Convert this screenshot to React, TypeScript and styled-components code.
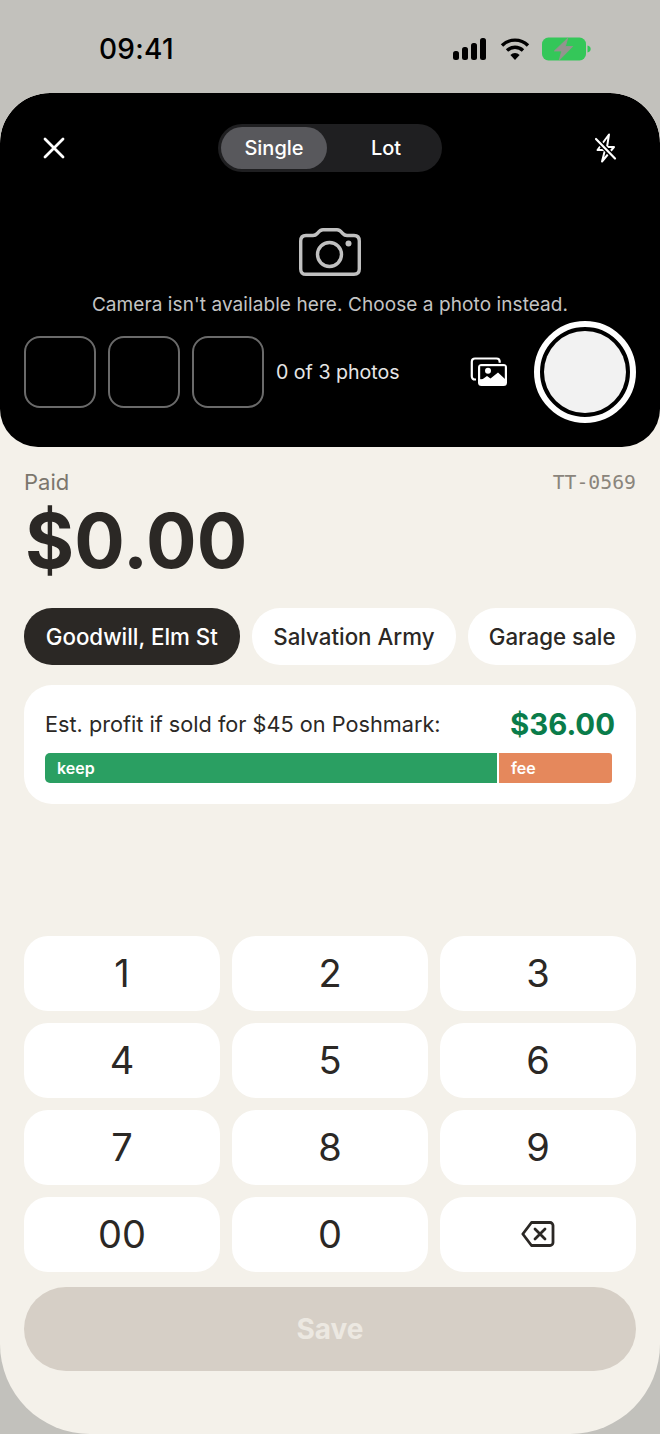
import styled, { createGlobalStyle } from "styled-components";

const GlobalStyle = createGlobalStyle`
  html, body {
    margin: 0;
    padding: 0;
    background: #c2c1bc;
  }
  * {
    box-sizing: border-box;
  }
  body {
    font-family: Inter, "Liberation Sans", sans-serif;
  }
`;

const KEYS = ["1", "2", "3", "4", "5", "6", "7", "8", "9", "00", "0"];
const STORES = ["Goodwill, Elm St", "Salvation Army", "Garage sale"];

export default function App() {
  return (
    <Page>
      <GlobalStyle />
      <StatusBar>
        <Clock>09:41</Clock>
        <StatusIcons>
          <svg width="36" height="24" viewBox="0 0 36 24" fill="#000">
            <rect x="1" y="14" width="6" height="9" rx="2.5" />
            <rect x="10" y="10" width="6" height="13" rx="2.5" />
            <rect x="19" y="6" width="6" height="17" rx="2.5" />
            <rect x="28" y="1" width="6" height="22" rx="2.5" />
          </svg>
          <svg width="30" height="24" viewBox="0 0 30 24" fill="none" stroke="#000" strokeWidth="3.4">
            <path d="M2 8.5a18.5 18.5 0 0 1 26 0" />
            <path d="M7 13.5a11.5 11.5 0 0 1 16 0" />
            <path d="M15 23l-4.6-5a6.4 6.4 0 0 1 9.2 0z" fill="#000" stroke="none" />
          </svg>
          <svg width="49" height="24" viewBox="0 0 49 24">
            <rect x="0" y="0.5" width="44" height="23" rx="6.5" fill="#34c759" />
            <path d="M45.5 8.5c2 .5 3.2 1.8 3.2 3.5s-1.2 3-3.2 3.5z" fill="#34c759" />
            <path d="M25.7 1.2 12.3 14h7.4l-2.4 9L30.7 9.5h-7.4z" fill="#94948f" stroke="#94948f" strokeWidth="0.8" strokeLinejoin="round" />
          </svg>
        </StatusIcons>
      </StatusBar>

      <Sheet>
        <CameraPanel>
          <CameraTop>
            <CloseButton aria-label="Close">
              <svg width="24" height="24" viewBox="0 0 24 24" fill="none" stroke="#fff" strokeWidth="2.8" strokeLinecap="round">
                <path d="M3 3l18 18M21 3L3 21" />
              </svg>
            </CloseButton>
            <Segmented>
              <Segment $active>Single</Segment>
              <Segment>Lot</Segment>
            </Segmented>
            <FlashButton aria-label="Flash off">
              <svg width="24" height="30" viewBox="0 0 24 30" fill="none" stroke="#fff" strokeLinejoin="round" strokeLinecap="round">
                <path d="M15 1.5 3.5 17H11L8 28.5 20 14h-7z" strokeWidth="2" />
                <path d="M2 6l19 19.5" stroke="#000" strokeWidth="5" />
                <path d="M2 6l19 19.5" strokeWidth="2.2" />
              </svg>
            </FlashButton>
          </CameraTop>

          <CameraIcon>
            <svg width="62" height="48" viewBox="0 0 62 48" fill="none" stroke="#c0c0c0" strokeWidth="3.4" strokeLinejoin="round">
              <path d="M7 7.5h7c2 0 3-.6 4.3-2C20 3.2 21 1.7 24 1.7h14c3 0 4 1.5 5.7 3.8 1.3 1.400 2.300 2 4.300 2h7c3.500 0 5.300 2 5.300 5.500v28c0 3.500-1.800 5.300-5.300 5.300H7c-3.500 0-5.300-1.800-5.300-5.300V13c0-3.500 1.800-5.500 5.300-5.500z" />
              <circle cx="30.5" cy="26.5" r="12" />
              <circle cx="49.5" cy="15.5" r="3" fill="#c0c0c0" stroke="none" />
            </svg>
          </CameraIcon>
          <Hint>Camera isn't available here. Choose a photo instead.</Hint>

          <CaptureRow>
            <Thumb />
            <Thumb />
            <Thumb />
            <PhotoCount>0 of 3 photos</PhotoCount>
            <GalleryIcon aria-label="Choose a photo">
              <svg width="38" height="30" viewBox="0 0 38 30" fill="none">
                <path d="M6 22.5H5c-2 0-3.2-1.200-3.200-3.200V4.700C1.800 2.700 3 1.500 5 1.500h21.500c2 0 3.200 1.200 3.200 3.200v1" stroke="#fff" strokeWidth="2.2" />
                <rect x="8" y="7" width="29" height="22" rx="3.5" fill="#fff" />
                <rect x="10.2" y="9.2" width="24.6" height="13" fill="#000" />
                <circle cx="18" cy="13.8" r="3" fill="#fff" />
                <path d="M10 24l7-5 3.5 2.5L28 15.5 35 22v5H10z" fill="#fff" />
              </svg>
            </GalleryIcon>
            <Shutter aria-label="Take photo">
              <ShutterCore />
            </Shutter>
          </CaptureRow>
        </CameraPanel>

        <Content>
          <PaidRow>
            <PaidLabel>Paid</PaidLabel>
            <TicketCode>TT-0569</TicketCode>
          </PaidRow>
          <Amount>$0.00</Amount>

          <Chips>
            {STORES.map((store, i) => (
              <Chip key={store} $selected={i === 0}>
                {store}
              </Chip>
            ))}
          </Chips>

          <ProfitCard>
            <ProfitRow>
              <ProfitLabel>Est. profit if sold for $45 on Poshmark:</ProfitLabel>
              <ProfitValue>$36.00</ProfitValue>
            </ProfitRow>
            <SplitBar>
              <Keep>keep</Keep>
              <Fee>fee</Fee>
            </SplitBar>
          </ProfitCard>

          <Keypad>
            {KEYS.map((key) => (
              <Key key={key}>{key}</Key>
            ))}
            <Key aria-label="Delete">
              <svg width="34" height="28" viewBox="0 0 34 28" fill="none" stroke="#2b2825" strokeWidth="2.8" strokeLinejoin="round" strokeLinecap="round">
                <path d="M10.5 2.5H29a3 3 0 0 1 3 3v17a3 3 0 0 1-3 3H10.5L1.8 14z" />
                <path d="M14 9l10 10M24 9L14 19" />
              </svg>
            </Key>
          </Keypad>

          <SaveButton disabled>Save</SaveButton>
        </Content>
      </Sheet>
    </Page>
  );
}

const Page = styled.div`
  width: 660px;
  height: 1434px;
  overflow: hidden;
  background: #c2c1bc;
  display: flex;
  flex-direction: column;
`;

const StatusBar = styled.div`
  height: 93px;
  flex: none;
  display: flex;
  align-items: center;
  justify-content: space-between;
  padding: 4px 69px 0 99px;
`;

const Clock = styled.div`
  font-size: 28px;
  font-weight: 500;
  color: #000;
  letter-spacing: 0.3px;
`;

const StatusIcons = styled.div`
  display: flex;
  align-items: center;
  gap: 12px;
`;

const Sheet = styled.div`
  flex: 1;
  background: #f4f1ea;
  border-radius: 50px 50px 90px 90px;
  overflow: hidden;
  display: flex;
  flex-direction: column;
`;

const CameraPanel = styled.div`
  height: 354px;
  flex: none;
  background: #000;
  border-radius: 50px 50px 38px 38px;
  padding: 31px 24px 0;
  display: flex;
  flex-direction: column;
  align-items: center;
`;

const CameraTop = styled.div`
  width: 100%;
  height: 48px;
  display: grid;
  grid-template-columns: 1fr 224px 1fr;
  align-items: center;
  padding: 0 18px;
`;

const IconButton = styled.button`
  border: 0;
  padding: 0;
  background: none;
  display: flex;
  align-items: center;
  justify-content: center;
`;

const CloseButton = styled(IconButton)`
  justify-self: start;
`;

const FlashButton = styled(IconButton)`
  justify-self: end;
`;

const Segmented = styled.div`
  height: 48px;
  border-radius: 24px;
  background: #1f1f21;
  padding: 3px;
  display: flex;
`;

const Segment = styled.div<{ $active?: boolean }>`
  flex: ${(p) => (p.$active ? "0 0 106px" : "1")};
  padding-left: ${(p) => (p.$active ? "0" : "6px")};
  border-radius: 21px;
  background: ${(p) => (p.$active ? "#58585c" : "transparent")};
  color: #fff;
  font-size: 20px;
  font-weight: 500;
  display: flex;
  align-items: center;
  justify-content: center;
`;

const CameraIcon = styled.div`
  margin-top: 56px;
  height: 48px;
  display: flex;
`;

const Hint = styled.div`
  margin-top: 17px;
  font-size: 19px;
  line-height: 24px;
  letter-spacing: 0.08px;
  color: #c4c4c4;
  white-space: nowrap;
`;

const CaptureRow = styled.div`
  width: 100%;
  margin-top: 4px;
  height: 102px;
  display: flex;
  align-items: center;
  gap: 12px;
`;

const Thumb = styled.div`
  width: 72px;
  height: 72px;
  flex: none;
  border-radius: 16px;
  border: 2px solid #6a6a6a;
`;

const PhotoCount = styled.div`
  font-size: 19.6px;
  color: #e6e6e6;
`;

const GalleryIcon = styled(IconButton)`
  margin-left: auto;
  margin-right: 14px;
`;

const Shutter = styled.button`
  width: 102px;
  height: 102px;
  flex: none;
  border-radius: 50%;
  border: 6px solid #fff;
  padding: 4px;
  background: #000;
`;

const ShutterCore = styled.div`
  width: 100%;
  height: 100%;
  border-radius: 50%;
  background: #f2f2f2;
`;

const Content = styled.div`
  flex: 1;
  padding: 22px 24px 63px;
  display: flex;
  flex-direction: column;
`;

const PaidRow = styled.div`
  display: flex;
  align-items: center;
  justify-content: space-between;
  height: 26px;
`;

const PaidLabel = styled.div`
  font-size: 22px;
  color: #7b766d;
`;

const TicketCode = styled.div`
  font-family: "DejaVu Sans Mono", "Liberation Mono", monospace;
  font-size: 19.8px;
  color: #8a857c;
`;

const Amount = styled.div`
  margin-top: 4px;
  padding-left: 1px;
  font-size: 75px;
  line-height: 84px;
  font-weight: 700;
  color: #2b2825;
  letter-spacing: 0.2px;
`;

const Chips = styled.div`
  margin-top: 25px;
  display: flex;
  gap: 12px;
`;

const Chip = styled.div<{ $selected?: boolean }>`
  height: 57px;
  flex: 1 1 auto;
  padding: 0 20.5px;
  border-radius: 28px;
  background: ${(p) => (p.$selected ? "#2b2825" : "#fff")};
  color: ${(p) => (p.$selected ? "#fff" : "#2b2825")};
  font-size: 22.3px;
  font-weight: 500;
  white-space: nowrap;
  display: flex;
  align-items: center;
  justify-content: center;
  &:last-child {
    flex-grow: 0;
  }
`;

const ProfitCard = styled.div`
  margin-top: 20px;
  height: 119px;
  flex: none;
  border-radius: 28px;
  background: #fff;
  padding: 21px 21px 0;
`;

const ProfitRow = styled.div`
  height: 36px;
  display: flex;
  align-items: center;
  justify-content: space-between;
`;

const ProfitLabel = styled.div`
  font-size: 21.7px;
  color: #2b2825;
`;

const ProfitValue = styled.div`
  font-size: 29.4px;
  font-weight: 700;
  color: #0a7c4a;
`;

const SplitBar = styled.div`
  width: 567px;
  height: 30px;
  margin-top: 11px;
  display: flex;
  gap: 2px;
  color: #fff;
  font-size: 16px;
  font-weight: 600;
`;

const Keep = styled.div`
  width: 452px;
  flex: none;
  border-radius: 5px 0 0 5px;
  background: #2a9f62;
  padding-left: 12px;
  display: flex;
  align-items: center;
`;

const Fee = styled.div`
  flex: 1;
  border-radius: 0 3px 3px 0;
  background: #e5885c;
  padding-left: 12px;
  display: flex;
  align-items: center;
`;

const Keypad = styled.div`
  margin-top: auto;
  display: grid;
  grid-template-columns: repeat(3, 1fr);
  grid-auto-rows: 75px;
  gap: 12px;
`;

const Key = styled.button`
  border: 0;
  padding: 0 0 2px;
  border-radius: 24px;
  background: #fff;
  font-family: inherit;
  font-size: 38px;
  color: #2b2825;
  display: flex;
  align-items: center;
  justify-content: center;
`;

const SaveButton = styled.button`
  margin-top: 15px;
  height: 84px;
  flex: none;
  border: 0;
  border-radius: 42px;
  background: #d6cfc6;
  color: #ece8e1;
  font-family: inherit;
  font-size: 28px;
  font-weight: 700;
`;
